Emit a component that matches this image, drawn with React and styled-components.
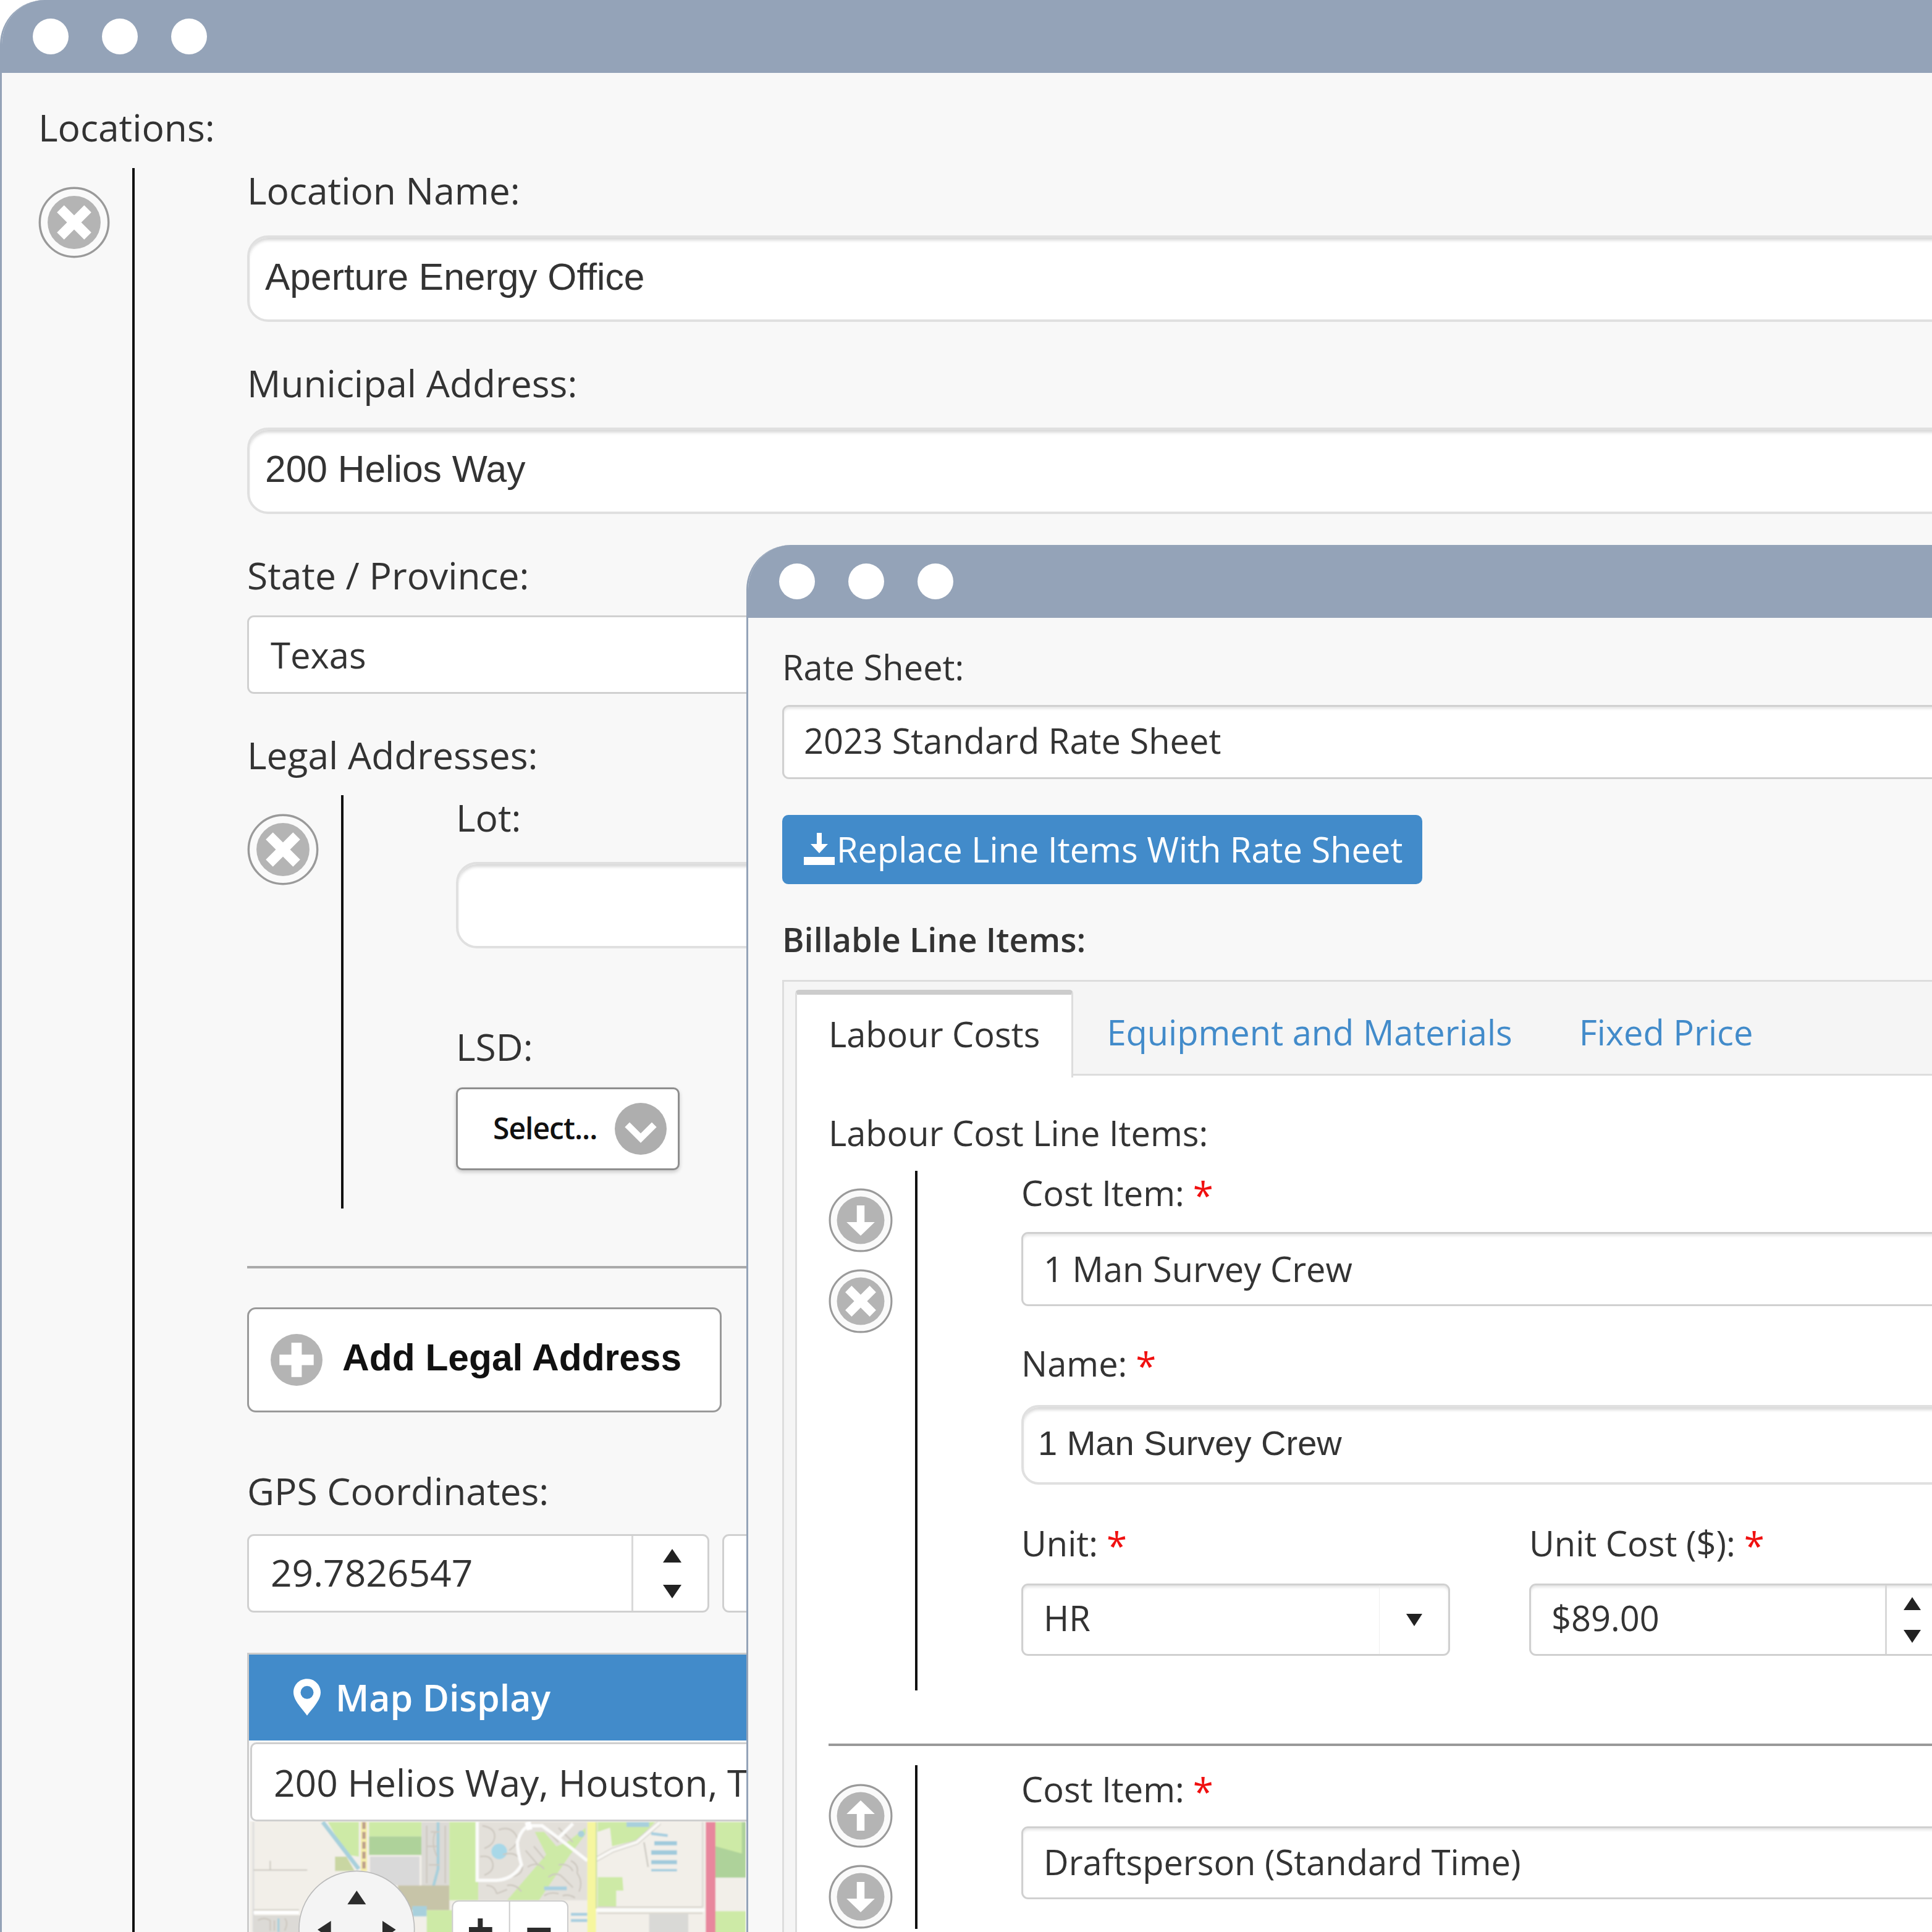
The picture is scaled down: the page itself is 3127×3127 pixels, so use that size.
import React from "react";
import styled, { createGlobalStyle } from "styled-components";

const Global = createGlobalStyle`
  html, body { margin: 0; padding: 0; background: #fff; }
  body { width: 3127px; height: 3127px; overflow: hidden; font-family: "Open Sans", sans-serif; color: #333; }
  * { box-sizing: border-box; }
`;

const Page = styled.div`
  position: relative;
  width: 3127px;
  height: 3127px;
  overflow: hidden;
`;

const Window = styled.div`
  position: ${(p) => (p.$floating ? "absolute" : "relative")};
  left: ${(p) => (p.$floating ? "1208px" : "0")};
  top: ${(p) => (p.$floating ? "882px" : "0")};
  width: ${(p) => (p.$floating ? "2100px" : "3400px")};
  height: ${(p) => (p.$floating ? "2245px" : "3127px")};
  background: #f8f8f8;
  border-left: 3px solid #94a3b8;
  border-top-left-radius: 72px;
  overflow: hidden;
`;

const TitleBar = styled.div`
  display: flex;
  align-items: center;
  gap: 54px;
  height: 118px;
  margin-left: -3px;
  padding-left: ${(p) => p.$pad}px;
  background: #94a3b8;
`;

const Dot = styled.span`
  width: 58px;
  height: 58px;
  border-radius: 50%;
  background: #fff;
`;

const OuterBody = styled.div`
  padding: 52px 0 0 59px;
`;

const Label = styled.div`
  margin-top: ${(p) => p.$mt || 0}px;
  height: 76px;
  line-height: 72px;
  font-size: 60.5px;
  white-space: nowrap;
  color: #333;
`;

const Row = styled.div`
  display: flex;
  margin-top: ${(p) => p.$mt || 0}px;
`;

const Gutter = styled.div`
  display: flex;
  flex-direction: column;
  align-items: flex-start;
  gap: ${(p) => p.$gap || 0}px;
  width: ${(p) => p.$width}px;
  padding-top: ${(p) => p.$pad}px;
  flex-shrink: 0;
`;

const Rail = styled.div`
  flex: 1;
  min-width: 0;
  border-left: 4px solid #111;
  padding-left: ${(p) => p.$pad}px;
  padding-bottom: ${(p) => p.$bottom || 0}px;
`;

const RoundInput = styled.div`
  display: flex;
  align-items: center;
  height: ${(p) => p.$h || 140}px;
  margin-top: ${(p) => p.$mt || 0}px;
  padding: 0 0 7px ${(p) => p.$pad || 25}px;
  background: #fff;
  border: 4px solid #e0e0e0;
  border-radius: ${(p) => p.$r || 34}px;
  box-shadow: inset 0 6px 5px -2px #d8d8d8;
  font-family: "Liberation Sans", Arial, sans-serif;
  font-size: ${(p) => p.$size || 60.5}px;
  color: #333;
`;

const Box = styled.div`
  display: flex;
  align-items: center;
  position: relative;
  width: ${(p) => (p.$w ? `${p.$w}px` : "auto")};
  height: ${(p) => p.$h}px;
  margin-top: ${(p) => p.$mt || 0}px;
  padding: 0 0 ${(p) => p.$pb || 0}px ${(p) => p.$pad || 35}px;
  background: #fff;
  border: 3px solid #d0d0d0;
  border-radius: 11px;
  box-shadow: ${(p) => (p.$inset ? "inset 0 4px 4px -1px #e4e4e4" : "none")};
  font-size: ${(p) => p.$size || 58}px;
  color: #333;
  white-space: nowrap;
  flex-shrink: 0;
`;

const Spinner = styled.div`
  position: absolute;
  top: 0;
  bottom: 0;
  left: ${(p) => p.$left}px;
  width: ${(p) => p.$width}px;
  display: flex;
  flex-direction: column;
  align-items: center;
  justify-content: center;
  gap: ${(p) => p.$gap}px;
  border-left: 3px solid #d9d9d9;
`;

const DropHandle = styled.div`
  position: absolute;
  top: 0;
  bottom: 0;
  right: 0;
  width: 112px;
  display: flex;
  align-items: center;
  justify-content: center;
  border-left: 1px solid #f0f0f0;
`;

const Tri = styled.span`
  width: 0;
  height: 0;
  border-left: ${(p) => p.$w}px solid transparent;
  border-right: ${(p) => p.$w}px solid transparent;
  ${(p) => (p.$up ? "border-bottom" : "border-top")}: ${(p) => p.$h}px solid #222;
`;

const SelectButton = styled.div`
  display: flex;
  align-items: center;
  justify-content: space-between;
  width: 362px;
  height: 134px;
  margin-top: 26px;
  padding: 0 18px 0 57px;
  background: #fff;
  border: 3px solid #8e8e8e;
  border-radius: 10px;
  box-shadow: 0 3px 6px rgba(0, 0, 0, 0.2);
  font-size: 48px;
  font-weight: 600;
  letter-spacing: -1px;
  color: #111;
`;

const SelectText = styled.span`
  margin-bottom: 3px;
`;

const Divider = styled.div`
  height: 4px;
  margin-top: ${(p) => p.$mt}px;
  background: ${(p) => p.$color || "#aaa"};
`;

const AddButton = styled.div`
  display: flex;
  align-items: center;
  gap: 32px;
  width: 768px;
  height: 170px;
  margin-top: 63px;
  padding-left: 35px;
  background: #fff;
  border: 3px solid #999;
  border-radius: 14px;
  font-family: "Liberation Sans", Arial, sans-serif;
  font-size: 60.5px;
  font-weight: 700;
  color: #111;
`;

const AddText = styled.span`
  margin-bottom: 8px;
`;

const CoordRow = styled.div`
  display: flex;
  gap: 21px;
`;

const MapPanel = styled.div`
  margin-top: 65px;
  border-left: 3px solid #ccc;
`;

const MapHeader = styled.div`
  display: flex;
  align-items: center;
  gap: 24px;
  height: 142px;
  padding: 0 0 2px 72px;
  background: #428bca;
  border-top: 3px solid #ccc;
  color: #fff;
  font-size: 59px;
  font-weight: 600;
`;

const MapSearch = styled.div`
  display: flex;
  align-items: center;
  height: 128px;
  margin: 3px 0 0 2px;
  padding-left: 35px;
  background: #fff;
  border: 3px solid #cfcfcf;
  border-radius: 10px;
  font-size: 60.5px;
  white-space: nowrap;
`;

const MapCanvas = styled.svg`
  display: block;
  width: 803px;
  height: 180px;
  margin-left: 1px;
`;

const InnerBody = styled.div`
  padding: 49px 0 0 55px;
`;

const InnerLabel = styled(Label)`
  height: 64px;
  line-height: 60px;
  font-size: ${(p) => (p.$bold ? 54 : 56)}px;
  font-weight: ${(p) => (p.$bold ? 600 : 400)};
`;

const Star = styled.span`
  position: relative;
  top: 5px;
  margin-left: 14px;
  color: #f01010;
  font-size: 60px;
  line-height: 0;
`;

const PrimaryButton = styled.div`
  display: flex;
  align-items: center;
  gap: 2px;
  width: 1036px;
  height: 112px;
  margin-top: 58px;
  padding: 0 0 2px 34px;
  background: #428bca;
  border-radius: 10px;
  color: #fff;
  font-size: 56px;
  white-space: nowrap;
`;

const TabFrame = styled.div`
  margin-top: 32px;
  padding: 13px 0 0 18px;
  background: #f5f5f5;
  border: 3px solid #ddd;
  border-right: 0;
`;

const TabStrip = styled.div`
  display: flex;
  height: 139px;
  border-bottom: 3px solid #ddd;
`;

const Tab = styled.div`
  display: flex;
  align-items: center;
  height: ${(p) => (p.$active ? "142px" : "136px")};
  padding: ${(p) => (p.$active ? "0 51px 8px" : "0 54px")};
  background: ${(p) => (p.$active ? "#fff" : "transparent")};
  border: ${(p) => (p.$active ? "3px solid #ddd" : "0")};
  border-top: ${(p) => (p.$active ? "8px solid #ccc" : "0")};
  border-bottom: 0;
  border-radius: 6px 6px 0 0;
  font-size: 56px;
  color: ${(p) => (p.$active ? "#333" : "#428bca")};
  white-space: nowrap;
  position: relative;
  z-index: 1;
`;

const TabBody = styled.div`
  padding: 62px 0 300px 51px;
  background: #fff;
  border-left: 3px solid #ddd;
`;

const UnitRow = styled.div`
  display: flex;
  gap: 128px;
  margin-top: 64px;
`;

const UnitCol = styled.div`
  width: ${(p) => p.$w}px;
  flex-shrink: 0;
`;

function RoundIcon({ kind, size }) {
  return (
    <svg width={size} height={size} viewBox="0 0 100 100">
      <circle cx="50" cy="50" r="48" fill="#fafafa" stroke="#9a9a9a" strokeWidth="3" />
      <circle cx="50" cy="50" r="37" fill="#b4b4b4" />
      {kind === "close" && (
        <path d="M31 31 L69 69 M69 31 L31 69" stroke="#fff" strokeWidth="14" fill="none" />
      )}
      {kind === "down" && <path d="M44 27 H56 V53 H72 L50 74 L28 53 H44 Z" fill="#fff" />}
      {kind === "up" && <path d="M44 73 H56 V47 H72 L50 26 L28 47 H44 Z" fill="#fff" />}
    </svg>
  );
}

function PlusDisc() {
  return (
    <svg width="84" height="84" viewBox="0 0 100 100">
      <circle cx="50" cy="50" r="50" fill="#b4b4b4" />
      <path d="M40 17 H60 V40 H83 V60 H60 V83 H40 V60 H17 V40 H40 Z" fill="#fff" />
    </svg>
  );
}

function ChevronDisc() {
  return (
    <svg width="84" height="84" viewBox="0 0 100 100">
      <circle cx="50" cy="50" r="50" fill="#aeaeae" />
      <path d="M24 42 L50 68 L76 42" stroke="#fff" strokeWidth="13" fill="none" />
    </svg>
  );
}

function PinIcon() {
  return (
    <svg width="44" height="60" viewBox="0 0 46 62">
      <path
        fillRule="evenodd"
        d="M23 0 C36 0 46 10 46 23 C46 37 30 52 23 62 C16 52 0 37 0 23 C0 10 10 0 23 0 Z M23 12 A11 11 0 1 0 23 34 A11 11 0 1 0 23 12 Z"
        fill="#fff"
      />
    </svg>
  );
}

function DownloadIcon() {
  return (
    <svg width="52" height="52" viewBox="0 0 52 52">
      <path d="M22 0 H30 V18 H40 L26 33 L12 18 H22 Z M1 39 H51 V52 H1 Z" fill="#fff" />
    </svg>
  );
}

// street texture for the housing blocks
const houses = [
  "M1130 30 q60 10 60 50 t-50 60 M1120 180 q50 -10 60 30 t-40 60 M1150 320 q40 0 50 40",
  "M1210 50 q50 -20 80 20 t-30 80 M1230 170 q70 -20 90 40 t-60 70 M1250 320 q40 -10 70 30",
  "M1440 50 l60 60 M1500 40 l70 70 M1350 230 q50 -30 80 10 M1380 130 l50 60 M1340 150 l60 70",
  "M1450 280 q40 -30 70 0 t50 50 M1500 220 q50 -10 70 30 M1560 200 q40 20 30 60 M1590 260 q30 40 10 90",
  "M1430 370 q30 -20 70 -10 M1520 370 q30 -10 60 10 M1200 360 l50 -20",
  "M860 30 v280 M900 60 q-20 60 10 120 M950 30 v280 M880 60 h40 M860 130 h50 M870 220 h50",
  "M40 490 q30 -20 60 0 v50 M120 490 v50 M170 480 q20 20 0 60",
];

function MapDrawing() {
  return (
    <MapCanvas viewBox="0 9 2409 540">
      <defs>
        <filter id="soft">
          <feGaussianBlur stdDeviation="3" />
        </filter>
      </defs>
      <g filter="url(#soft)">
        <rect x="0" y="0" width="2409" height="560" fill="#f2efe9" />
        <path d="M18 12 V546" stroke="#dcdcdc" strokeWidth="8" />
        <path d="M20 245 H280 M100 200 V245" stroke="#cbc8c0" strokeWidth="6" fill="none" />
        <rect x="20" y="465" width="240" height="90" fill="#dcdad6" />
        <path d="M20 438 H240" stroke="#d5d2ca" strokeWidth="6" />
        <path d="M20 452 H240" stroke="#fff" strokeWidth="16" />
        <path d="M140 480 V546" stroke="#a8d0dc" strokeWidth="10" />

        <path d="M380 12 H530 V180 L470 170 Z" fill="#cdeaa6" />
        <path d="M415 180 H470 L510 250 H415 Z" fill="#c9d6a2" />
        <path d="M355 12 L530 240" stroke="#a8d0dc" strokeWidth="20" />
        <rect x="540" y="12" width="30" height="240" fill="#f5eea8" />
        <path d="M555 12 V245" stroke="#bd9f8c" strokeWidth="16" strokeDasharray="34 14" />
        <rect x="580" y="12" width="255" height="70" fill="#cdeaa6" />
        <rect x="580" y="82" width="255" height="90" fill="#aed29a" />
        <rect x="585" y="180" width="240" height="140" fill="#d9d9d9" />
        <rect x="835" y="12" width="135" height="310" fill="#dcdad6" />
        <path d="M915 12 V240 L880 370" stroke="#a8d0dc" strokeWidth="14" fill="none" />
        <rect x="720" y="320" width="250" height="120" fill="#c7c4a8" />
        <rect x="790" y="420" width="70" height="50" fill="#a8d0dc" />
        <rect x="860" y="440" width="125" height="120" fill="#cdeaa6" />
        <rect x="970" y="12" width="140" height="380" fill="#cdeaa6" />

        <rect x="1110" y="12" width="530" height="380" fill="#e3e0da" />
        <path d="M1385 60 L1440 170 L1250 392 H1405 L1550 180 L1632 70 V40 L1540 110 L1490 130 L1430 60 Z" fill="#cdeaa6" />
        <circle cx="1212" cy="155" r="38" fill="#a8d8e8" />
        <circle cx="1610" cy="70" r="16" fill="#a8d0dc" />
        <rect x="1430" y="325" width="110" height="18" fill="#a8cfe0" />
        <path d={houses.join(" ")} stroke="#cdc8c0" strokeWidth="7" fill="none" />
        <path d="M1105 12 V295 H1200 Q1280 290 1320 220 Q1300 150 1300 110 Q1320 40 1360 30 H1420 L1500 90 L1640 200 M1500 90 L1570 20" stroke="#fbfbfa" strokeWidth="16" fill="none" />
        <path d="M1350 12 L1360 50" stroke="#fff" strokeWidth="28" />

        <path d="M1690 12 H1970 L1880 100 L1760 130 L1750 40 L1690 60 Z" fill="#cdeaa6" />
        <rect x="1830" y="12" width="110" height="24" fill="#a8d0dc" />
        <path d="M1680 195 L1760 150 L1880 110 L1990 15" stroke="#d4d1ca" strokeWidth="24" fill="none" />
        <path d="M1680 195 L1760 150 L1880 110 L1990 15" stroke="#f9f8f5" strokeWidth="15" fill="none" />
        <path d="M1915 110 L1935 230" stroke="#d0cdc6" strokeWidth="8" fill="none" />
        <path d="M1950 68 L2030 78" stroke="#a8cfe0" strokeWidth="14" />
        <path d="M1965 115 H2075" stroke="#a0cadc" strokeWidth="20" />
        <path d="M1950 160 H2075" stroke="#a0cadc" strokeWidth="22" />
        <path d="M1950 207 H2075" stroke="#a0cadc" strokeWidth="20" />
        <path d="M1950 246 H2075" stroke="#a8cfe0" strokeWidth="12" />
        <path d="M1690 280 H1810 L1815 345 H1780 V425 H1690 Z" fill="#cdeaa6" />
        <path d="M1690 425 H2200 M1690 455 H2200" stroke="#d8d5cd" strokeWidth="7" />
        <path d="M1680 440 H2210" stroke="#fbfbf9" strokeWidth="16" />
        <path d="M2200 12 V425" stroke="#dfdcd6" strokeWidth="9" />
        <rect x="1940" y="458" width="190" height="100" fill="#d9d9d6" />
        <path d="M1560 460 H1640 M1560 490 H1640" stroke="#a8cfe0" strokeWidth="14" />
        <rect x="1640" y="12" width="42" height="560" fill="#f6f69f" />
        <rect x="1680" y="12" width="7" height="420" fill="#cfe0a0" />
        <rect x="2215" y="12" width="47" height="560" fill="#e8879d" />
        <rect x="2262" y="12" width="147" height="270" fill="#aed29a" />
        <path d="M2262 12 H2390 V165 L2262 130 Z" fill="#cdeaa6" />
        <rect x="2262" y="445" width="147" height="110" fill="#cdeaa6" />
      </g>

      <circle cx="520" cy="530" r="280" fill="#f4f4f4" stroke="#bbb" strokeWidth="5" />
      <path d="M520 345 L565 412 H475 Z M330 535 L395 492 V580 Z M710 535 L645 492 V580 Z" fill="#2c2c2c" />
      <rect x="985" y="395" width="560" height="240" rx="30" fill="#fff" stroke="#ccc" strokeWidth="6" />
      <path d="M1262 395 V640" stroke="#ccc" strokeWidth="6" />
      <path d="M1108 480 H1132 V522 H1178 V550 H1065 V522 H1108 Z M1348 525 H1462 V550 H1348 Z" fill="#2c2c2c" />
    </MapCanvas>
  );
}

function Dots({ pad }) {
  return (
    <TitleBar $pad={pad}>
      <Dot />
      <Dot />
      <Dot />
    </TitleBar>
  );
}

function Required({ children, mt }) {
  return (
    <InnerLabel $mt={mt}>
      {children}
      <Star>*</Star>
    </InnerLabel>
  );
}

export default function App() {
  return (
    <Page>
      <Global />
      <Window>
        <Dots pad={53} />
        <OuterBody>
          <Label>Locations:</Label>
          <Row $mt={26}>
            <Gutter $width={152} $pad={30}>
              <RoundIcon kind="close" size={116} />
            </Gutter>
            <Rail $pad={182}>
              <Label>Location Name:</Label>
              <RoundInput $mt={33}>Aperture Energy Office</RoundInput>
              <Label $mt={63}>Municipal Address:</Label>
              <RoundInput $mt={32}>200 Helios Way</RoundInput>
              <Label $mt={63}>State / Province:</Label>
              <Box $h={127} $mt={25}>Texas</Box>
              <Label $mt={63}>Legal Addresses:</Label>
              <Row $mt={25}>
                <Gutter $width={152} $pad={30}>
                  <RoundIcon kind="close" size={116} />
                </Gutter>
                <Rail $pad={182} $bottom={62}>
                  <Label>Lot:</Label>
                  <RoundInput $mt={32} />
                  <Label $mt={123}>LSD:</Label>
                  <SelectButton>
                    <SelectText>Select...</SelectText>
                    <ChevronDisc />
                  </SelectButton>
                </Rail>
              </Row>
              <Divider $mt={93} />
              <AddButton>
                <PlusDisc />
                <AddText>Add Legal Address</AddText>
              </AddButton>
              <Label $mt={91}>GPS Coordinates:</Label>
              <CoordRow>
                <Box $h={127} $mt={30} $w={748} $size={60.5} $pb={4}>
                  29.7826547
                  <Spinner $left={619} $width={128} $gap={36}>
                    <Tri $up $w={15} $h={22} />
                    <Tri $w={15} $h={22} />
                  </Spinner>
                </Box>
                <Box $h={127} $mt={30} $w={748} />
              </CoordRow>
              <MapPanel>
                <MapHeader>
                  <PinIcon />
                  Map Display
                </MapHeader>
                <MapSearch>200 Helios Way, Houston, Texas</MapSearch>
                <MapDrawing />
              </MapPanel>
            </Rail>
          </Row>
        </OuterBody>
      </Window>

      <Window $floating>
        <Dots pad={53} />
        <InnerBody>
          <InnerLabel>Rate Sheet:</InnerLabel>
          <Box $h={120} $mt={28} $size={56} $pad={32} $pb={6} $inset>2023 Standard Rate Sheet</Box>
          <PrimaryButton>
            <DownloadIcon />
            Replace Line Items With Rate Sheet
          </PrimaryButton>
          <InnerLabel $mt={59} $bold>Billable Line Items:</InnerLabel>
          <TabFrame>
            <TabStrip>
              <Tab $active>Labour Costs</Tab>
              <Tab>Equipment and Materials</Tab>
              <Tab>Fixed Price</Tab>
            </TabStrip>
            <TabBody>
              <InnerLabel>Labour Cost Line Items:</InnerLabel>
              <Row $mt={28}>
                <Gutter $width={140} $pad={28} $gap={27}>
                  <RoundIcon kind="down" size={104} />
                  <RoundIcon kind="close" size={104} />
                </Gutter>
                <Rail $pad={168} $bottom={56}>
                  <Required mt={5}>Cost Item:</Required>
                  <Box $h={120} $mt={30} $size={56} $pad={33} $pb={2} $inset>1 Man Survey Crew</Box>
                  <Required mt={62}>Name:</Required>
                  <RoundInput $h={129} $mt={34} $r={28} $size={56} $pad={23}>1 Man Survey Crew</RoundInput>
                  <UnitRow>
                    <UnitCol $w={694}>
                      <Required>Unit:</Required>
                      <Box $h={117} $mt={32} $size={56} $pad={33} $pb={8} $inset>
                        HR
                        <DropHandle>
                          <Tri $w={13} $h={20} />
                        </DropHandle>
                      </Box>
                    </UnitCol>
                    <UnitCol $w={800}>
                      <Required>Unit Cost ($):</Required>
                      <Box $h={117} $mt={32} $size={56} $pad={33} $pb={8} $inset>
                        $89.00
                        <Spinner $left={573} $width={84} $gap={32}>
                          <Tri $up $w={14} $h={21} />
                          <Tri $w={14} $h={21} />
                        </Spinner>
                      </Box>
                    </UnitCol>
                  </UnitRow>
                </Rail>
              </Row>
              <Divider $mt={86} $color="#999" />
              <Row $mt={31}>
                <Gutter $width={140} $pad={30} $gap={27}>
                  <RoundIcon kind="up" size={104} />
                  <RoundIcon kind="down" size={104} />
                </Gutter>
                <Rail $pad={168}>
                  <Required mt={8}>Cost Item:</Required>
                  <Box $h={118} $mt={27} $size={56} $pad={33} $pb={4} $inset>Draftsperson (Standard Time)</Box>
                </Rail>
              </Row>
            </TabBody>
          </TabFrame>
        </InnerBody>
      </Window>
    </Page>
  );
}
